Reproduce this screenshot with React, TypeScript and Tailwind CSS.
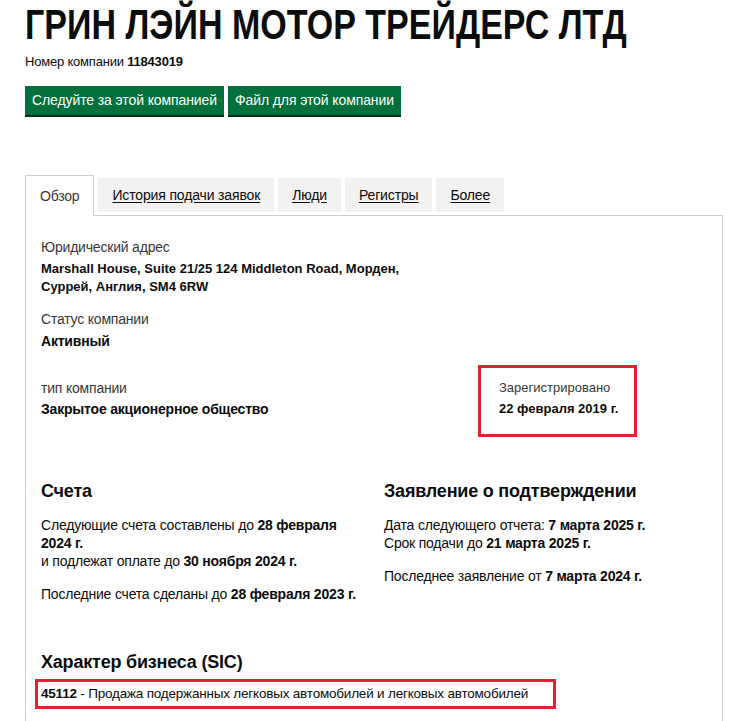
const base = "font-['Liberation_Sans','Arial',sans-serif]";

function Tab({ label, active }: { label: string; active?: boolean }) {
  if (active) {
    return (
      <div className="relative -mb-px h-[41px] border border-b-0 border-[#cfcfcf] bg-white px-[14px] pt-[10px] text-[14px] leading-[20px] tracking-[-0.2px] text-[#383838]">
        {label}
      </div>
    );
  }
  return (
    <div className="mb-[3px] h-[34px] bg-[#f3f2f1] px-[14px] pt-[7px] text-[14px] leading-[20px] tracking-[-0.15px] text-[#0b0c0c] underline underline-offset-2">
      {label}
    </div>
  );
}

export default function App() {
  return (
    <div className={`${base} min-h-[721px] w-[748px] overflow-hidden bg-white pl-[25px] text-[#0b0c0c]`}>
      <h1 className="inline-block origin-left scale-x-[0.81] whitespace-nowrap pt-[2px] text-[42px] font-bold leading-[46px]">
        ГРИН ЛЭЙН МОТОР ТРЕЙДЕРС ЛТД
      </h1>
      <p className="mt-[6px] text-[13px] leading-[16px] tracking-[-0.2px]">
        Номер компании <b>11843019</b>
      </p>
      <div className="mt-[16px] flex gap-[4px]">
        <button className="h-[29px] bg-[#00703c] px-[7px] text-[14px] tracking-[-0.1px] text-white shadow-[0_2px_0_#002d18]">
          Следуйте за этой компанией
        </button>
        <button className="h-[29px] bg-[#00703c] px-[7px] text-[14px] tracking-[-0.1px] text-white shadow-[0_2px_0_#002d18]">
          Файл для этой компании
        </button>
      </div>

      <div className="mr-[25px] mt-[60px] flex items-end gap-[4px] border-b border-[#cfcfcf]">
        <Tab label="Обзор" active />
        <Tab label="История подачи заявок" />
        <Tab label="Люди" />
        <Tab label="Регистры" />
        <Tab label="Более" />
      </div>

      <div className="mr-[25px] border-x border-[#cfcfcf] px-[15px] pt-[22px] pb-[20px] text-[14px] leading-[18px] tracking-[-0.2px]">
        <div className="text-[#383838]">Юридический адрес</div>
        <div className="mt-[4px] w-[390px] text-[13px] font-bold tracking-normal">
          Marshall House, Suite 21/25 124 Middleton Road, Морден, Суррей, Англия, SM4 6RW
        </div>

        <div className="mt-[14px] text-[#383838]">Статус компании</div>
        <div className="mt-[4px] font-bold">Активный</div>

        <div className="mt-[15px] flex">
          <div className="w-[437px] pt-[14px]">
            <div className="text-[#383838]">тип компании</div>
            <div className="mt-[3px] font-bold">Закрытое акционерное общество</div>
          </div>
          <div className="w-[159px] border-[3px] border-[#e4202e] pl-[18px] pt-[11px] pb-[16px] text-[13px] tracking-normal">
            <div className="text-[#383838]">Зарегистрировано</div>
            <div className="mt-[3px] font-bold">22 февраля 2019 г.</div>
          </div>
        </div>

        <div className="mt-[43px] flex">
          <div className="w-[343px]">
            <h2 className="text-[18px] font-bold leading-[22px]">Счета</h2>
            <p className="mt-[14px]">
              Следующие счета составлены до <b>28 февраля</b>
              <br />
              <b>2024 г.</b>
              <br />и подлежат оплате до <b>30 ноября 2024 г.</b>
            </p>
            <p className="mt-[15px]">
              Последние счета сделаны до <b>28 февраля 2023 г.</b>
            </p>
          </div>
          <div>
            <h2 className="text-[18px] font-bold leading-[22px]">Заявление о подтверждении</h2>
            <p className="mt-[14px]">
              Дата следующего отчета: <b>7 марта 2025 г.</b>
              <br />
              Срок подачи до <b>21 марта 2025 г.</b>
            </p>
            <p className="mt-[15px]">
              Последнее заявление от <b>7 марта 2024 г.</b>
            </p>
          </div>
        </div>

        <h2 className="mt-[48px] text-[18px] font-bold leading-[22px]">Характер бизнеса (SIC)</h2>
        <div className="-ml-[6px] mt-[6px] w-[521px] border-[3px] border-[#e4202e] py-[3px] pl-[3px] text-[13.5px]">
          <b>45112</b> - Продажа подержанных легковых автомобилей и легковых автомобилей
        </div>
      </div>
    </div>
  );
}
